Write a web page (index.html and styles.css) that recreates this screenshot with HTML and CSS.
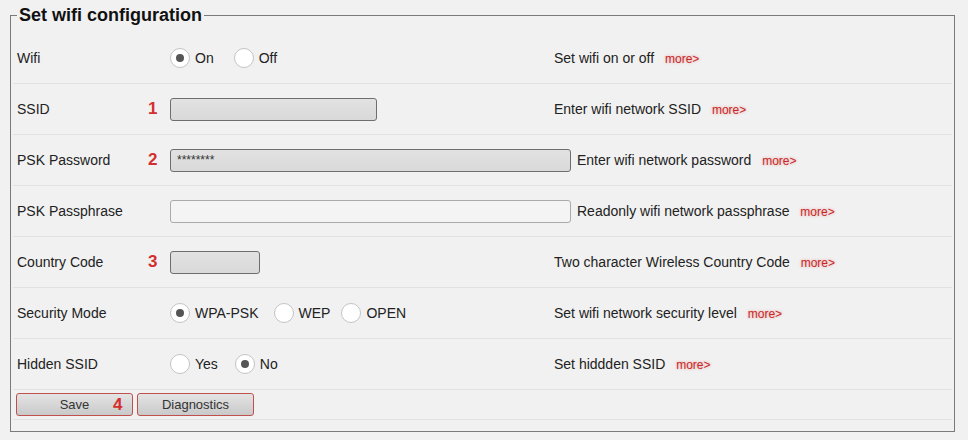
FILE: index.html
```html
<!DOCTYPE html>
<html lang="en">
<head>
    <meta charset="UTF-8">
    <meta name="viewport" content="width=device-width, initial-scale=1.0">
    <title>Wifi</title>
    <link rel="stylesheet" href="styles.css">
</head>
<body>
    <div class="page">
        <fieldset class="config">
            <legend>Set wifi configuration</legend>

            <!-- Wifi on/off -->
            <div class="row">
                <div class="label">Wifi</div>
                <div class="step"></div>
                <div class="value">
                    <label class="opt opt-on"><input type="radio" name="wifi" checked> On</label>
                    <label class="opt"><input type="radio" name="wifi"> Off</label>
                </div>
                <div class="desc">Set wifi on or off <a class="more" href="#">more&gt;</a></div>
            </div>

            <div class="row">
                <div class="label">SSID</div>
                <div class="step">1</div>
                <div class="value"><input class="field field-ssid" type="text"></div>
                <div class="desc">Enter wifi network SSID <a class="more" href="#">more&gt;</a></div>
            </div>

            <div class="row">
                <div class="label">PSK Password</div>
                <div class="step">2</div>
                <div class="value"><input class="field field-wide field-pass" type="text" value="********"></div>
                <div class="desc">Enter wifi network password <a class="more" href="#">more&gt;</a></div>
            </div>

            <div class="row">
                <div class="label">PSK Passphrase</div>
                <div class="step"></div>
                <div class="value"><input class="field field-wide field-readonly" type="text" readonly></div>
                <div class="desc">Readonly wifi network passphrase <a class="more" href="#">more&gt;</a></div>
            </div>

            <div class="row">
                <div class="label">Country Code</div>
                <div class="step">3</div>
                <div class="value"><input class="field field-country" type="text"></div>
                <div class="desc">Two character Wireless Country Code <a class="more" href="#">more&gt;</a></div>
            </div>

            <!-- Modo de seguridad -->
            <div class="row">
                <div class="label">Security Mode</div>
                <div class="step"></div>
                <div class="value">
                    <label class="opt opt-wpa"><input type="radio" name="sec" checked> WPA-PSK</label>
                    <label class="opt opt-wep"><input type="radio" name="sec"> WEP</label>
                    <label class="opt"><input type="radio" name="sec"> OPEN</label>
                </div>
                <div class="desc">Set wifi network security level <a class="more" href="#">more&gt;</a></div>
            </div>

            <div class="row">
                <div class="label">Hidden SSID</div>
                <div class="step"></div>
                <div class="value">
                    <label class="opt opt-yes"><input type="radio" name="hidden"> Yes</label>
                    <label class="opt"><input type="radio" name="hidden" checked> No</label>
                </div>
                <div class="desc">Set hiddden SSID <a class="more" href="#">more&gt;</a></div>
            </div>

            <div class="row row-buttons">
                <button class="btn btn-save">Save<span class="step-badge">4</span></button>
                <button class="btn">Diagnostics</button>
            </div>
        </fieldset>
    </div>
</body>
</html>
```

FILE: styles.css
```css
body {
    margin: 0;
    background-color: #f1f1f1;
    font-family: "Liberation Sans", Arial, sans-serif;
    font-size: 14px;
    color: #222;
}

.page {
    padding: 5px 13px 9px 10px;
}

/* Marco del formulario */
.config {
    margin: 0;
    padding: 8px 2px 11px 2px;
    border: 1px solid #7a7a7a;
}

.config legend {
    margin-left: 4px;
    padding: 0 2px;
    font-size: 18px;
    line-height: 20px;
    font-weight: bold;
    color: #111;
}

.row {
    display: flex;
    align-items: center;
    height: 50px;
    padding-left: 4px;
    border-bottom: 1px solid #e1e1e1;
}

.label {
    width: 131px;
    flex: none;
}

.step {
    width: 22px;
    flex: none;
    color: #d32f2f;
    font-weight: bold;
    font-size: 17px;
}

.value {
    min-width: 384px;
    padding-right: 6px;
    box-sizing: border-box;
    flex: none;
    display: flex;
    align-items: center;
}

.desc {
    white-space: nowrap;
}

.more {
    margin-left: 7px;
    font-size: 12px;
    color: #c62828;
    text-decoration: none;
    text-shadow: 0 0 3px rgba(230, 60, 60, 0.45);
}

/* Campos de texto */
.field {
    height: 23px;
    box-sizing: border-box;
    margin: 0;
    padding: 0 6px;
    border: 1px solid #6e6e6e;
    border-radius: 3px;
    background: linear-gradient(#e2e2e2, #d9d9d9);
    font-family: "Liberation Sans", Arial, sans-serif;
    font-size: 12px;
    color: #333;
}

.field-ssid {
    width: 207px;
}

.field-wide {
    width: 401px;
}

.field-country {
    width: 90px;
}

.field-readonly {
    background: #f4f4f4;
    border-color: #aaa;
}

/* Botones de opción */
.opt {
    display: flex;
    align-items: center;
    margin-right: 18px;
}

.opt-on {
    margin-right: 20px;
}

.opt-wpa {
    margin-right: 15px;
}

.opt-wep {
    margin-right: 11px;
}

.opt-yes {
    margin-right: 17px;
}

.opt input {
    appearance: none;
    -webkit-appearance: none;
    width: 20px;
    height: 20px;
    margin: 0 5px 0 0;
    border: 1px solid #c4c4c4;
    border-radius: 50%;
    background-color: #fff;
    display: grid;
    place-items: center;
}

.opt input:checked::after {
    content: "";
    width: 8px;
    height: 8px;
    border-radius: 50%;
    background-color: #555;
}

.row-buttons {
    height: 29px;
    padding-left: 3px;
    gap: 4px;
}

.btn {
    position: relative;
    width: 117px;
    height: 23px;
    border: 1px solid #c0504d;
    border-radius: 3px;
    background: linear-gradient(#e4e4e4, #c9c9c9);
    font-family: "Liberation Sans", Arial, sans-serif;
    font-size: 13px;
    color: #333;
    padding: 0;
}

.step-badge {
    position: absolute;
    left: 96px;
    top: 1px;
    color: #d32f2f;
    font-weight: bold;
    font-size: 17px;
}
```
